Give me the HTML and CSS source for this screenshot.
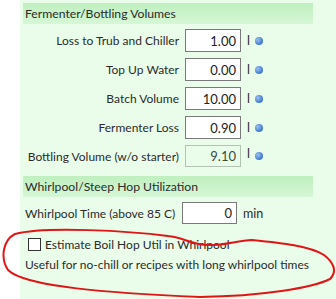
FILE: index.html
```html
<!DOCTYPE html>
<html lang="en">

<head>
    <meta charset="UTF-8">
    <title>Fermenter / Whirlpool</title>
    <link rel="stylesheet" href="styles.css">
</head>

<body>
    <div class="page">
        <div class="gutter"></div>
        <div class="panel">
            <!-- Fermenter / bottling -->
            <div class="section-head">Fermenter/Bottling Volumes</div>
            <div class="vol-grid">
                <label>Loss to Trub and Chiller</label>
                <input class="num" value="1.00">
                <span class="unit">l</span><span class="dot"></span>

                <label>Top Up Water</label>
                <input class="num" value="0.00">
                <span class="unit">l</span><span class="dot"></span>

                <label>Batch Volume</label>
                <input class="num" value="10.00">
                <span class="unit">l</span><span class="dot"></span>

                <label>Fermenter Loss</label>
                <input class="num" value="0.90">
                <span class="unit">l</span><span class="dot"></span>

                <label>Bottling Volume (w/o starter)</label>
                <input class="num readonly" value="9.10" readonly>
                <span class="unit up">l</span><span class="dot"></span>
            </div>

            <!-- Whirlpool -->
            <div class="section-head second">Whirlpool/Steep Hop Utilization</div>
            <div class="wp-row">
                <label>Whirlpool Time (above 85 C)</label>
                <input class="num" value="0">
                <span class="unit">min</span>
            </div>
            <div class="check-row">
                <span class="box"></span>
                <span>Estimate Boil Hop Util in Whirlpool</span>
            </div>
            <div class="note">Useful for no-chill or recipes with long whirlpool times</div>
        </div>
    </div>

    <!-- hand drawn marker -->
    <svg class="scribble" width="336" height="299" viewBox="0 0 336 299">
        <path d="M168 236 C130 231, 45 226, 15 234 C3 240, 0 258, 8 270 C25 287, 110 293, 200 297 C262 296, 312 288, 330 279 C338 271, 333 262, 324 255 C310 246, 282 243, 252 240 C236 241, 222 246, 206 245 C190 244, 182 237, 168 236"
            fill="none" stroke="#e01515" stroke-width="2" stroke-linecap="round" />
    </svg>
</body>

</html>
```

FILE: styles.css
```css
body {
    margin: 0;
    padding: 0;
    font-family: Lato, "Noto Sans", sans-serif;
    font-size: 12px;
    color: #2b2b2b;
    background-color: white;
}

.page {
    display: flex;
    height: 299px;
    overflow: hidden;
}

.gutter {
    width: 20px;
    flex-shrink: 0;
    background-color: white;
}

.panel {
    flex: 1;
    min-width: 0;
    background-color: #eafdea;
    padding: 3px 23px 0 3px;
    white-space: nowrap;
}

.section-head {
    height: 21px;
    line-height: 21px;
    padding-left: 2px;
    font-size: 12.2px;
    background: linear-gradient(to bottom, #bfefbf, #d6f7d6);
}

.section-head.second {
    margin-top: 9px;
}

.vol-grid {
    display: grid;
    grid-template-columns: 154px 56px 8px 10px;
    column-gap: 6px;
    row-gap: 6px;
    align-items: center;
    padding: 5px 0 0 2px;
}

.vol-grid label {
    text-align: right;
}

.num {
    box-sizing: border-box;
    width: 56px;
    height: 23px;
    border: 1px solid #7a7a7a;
    background-color: white;
    font-family: inherit;
    font-size: 13px;
    color: #222;
    text-align: right;
    padding: 0 4px;
    margin: 0;
}

.num.readonly {
    height: 22px;
    background-color: #eafdea;
    border-color: #b4c4b4;
    color: #3a4a3a;
}

.unit {
    font-size: 12.5px;
}

.unit.up {
    margin-top: -5px;
}

.dot {
    width: 8px;
    height: 8px;
    border-radius: 50%;
    background: radial-gradient(circle at 35% 35%, #9cc0f0, #3f78cc 70%);
}

.vol-grid .dot {
    margin-left: -6px;
}

.wp-row {
    display: flex;
    align-items: center;
    padding: 5px 0 0 2px;
    height: 22px;
}

.wp-row label {
    width: 157px;
}

.wp-row .num {
    width: 55px;
    height: 22px;
}

.wp-row .unit {
    margin-left: 6px;
}

.check-row {
    display: flex;
    align-items: center;
    gap: 4px;
    margin-top: 13px;
    padding-left: 5px;
}

.box {
    width: 11px;
    height: 11px;
    border: 1px solid #333;
    background-color: white;
}

.note {
    margin-top: 5px;
    padding-left: 2px;
}

.scribble {
    position: absolute;
    left: 0;
    top: 0;
    pointer-events: none;
}
```
